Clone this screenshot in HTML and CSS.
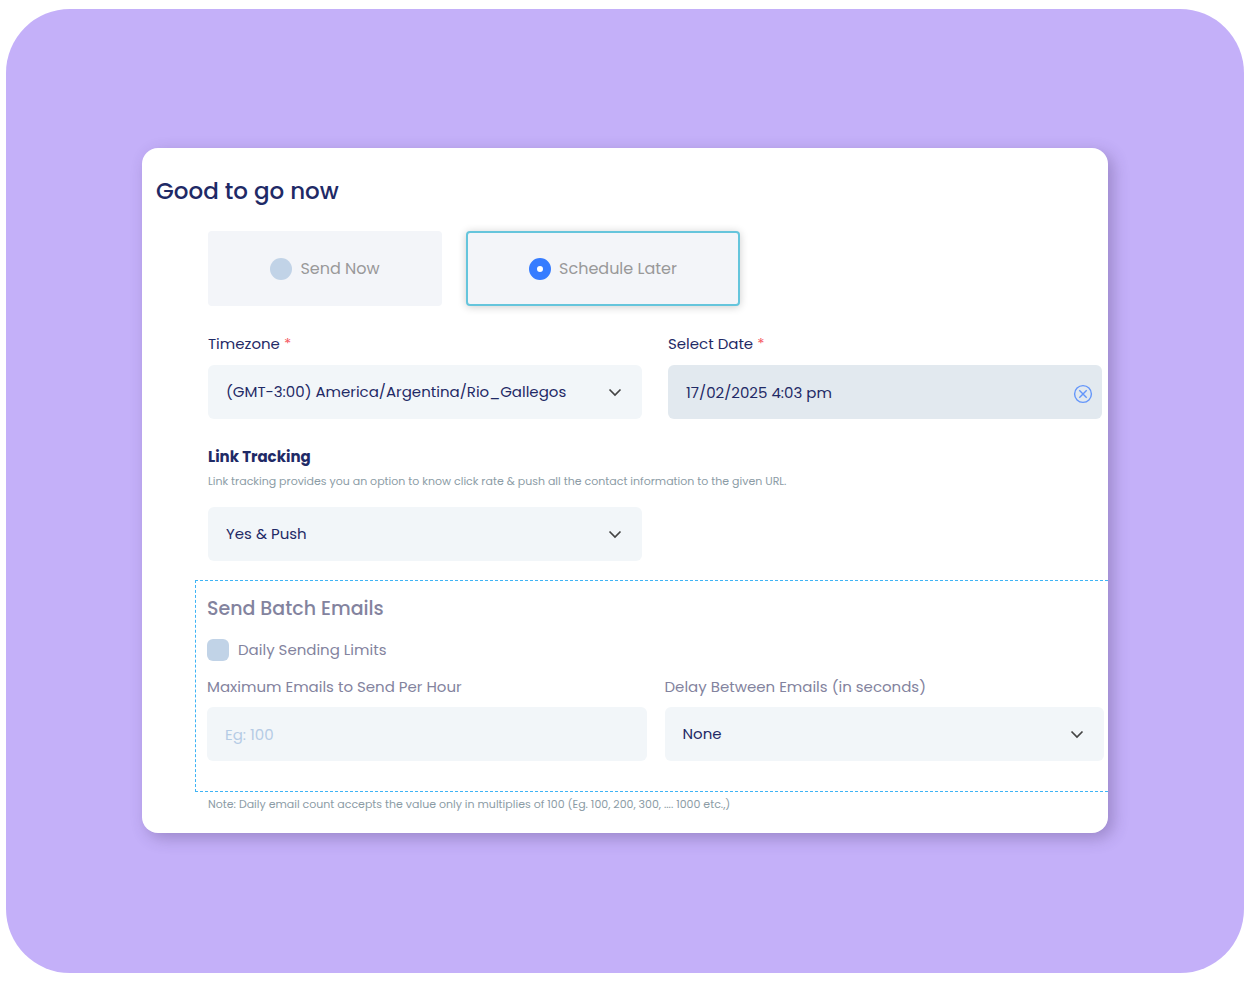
FILE: index.html
```
<!doctype html>
<html lang="en">

<head>
	<meta charset="UTF-8" />
	<meta name="viewport" content="width=device-width, initial-scale=1.0" />
	<title>Schedule campaign</title>
	<link rel="stylesheet" href="styles.css">
</head>

<body>
	<main class="stage">
		<form class="card">
			<h1>Good to go now</h1>
			<div class="content">
				<div class="send-options">
					<label class="option">
						<input type="radio" name="send" value="now">
						<span>Send Now</span>
					</label>
					<label class="option active">
						<input type="radio" name="send" value="later" checked>
						<span>Schedule Later</span>
					</label>
				</div>

				<div class="row">
					<div class="field">
						<label for="timezone">Timezone <span class="required">*</span></label>
						<div class="control">
							<select id="timezone">
								<option>(GMT-3:00) America/Argentina/Rio_Gallegos</option>
							</select>
							<svg class="chevron" viewBox="0 0 14 14"><path d="M1.5 4.5 7 10 12.5 4.5" /></svg>
						</div>
					</div>
					<div class="field">
						<label for="date">Select Date <span class="required">*</span></label>
						<div class="control">
							<input class="date" type="text" id="date" value="17/02/2025 4:03 pm">
							<button class="clear-btn" type="button" aria-label="Clear date">
								<svg viewBox="0 0 20 20"><circle cx="10" cy="10" r="8.4" /><path d="M6.3 6.3 13.7 13.7M13.7 6.3 6.3 13.7" /></svg>
							</button>
						</div>
					</div>
				</div>

				<div class="tracking">
					<h2><label for="tracking">Link Tracking</label></h2>
					<p class="hint">Link tracking provides you an option to know click rate &amp; push all the contact information to the given URL.</p>
					<div class="row">
						<div class="control">
							<select id="tracking">
								<option>Yes &amp; Push</option>
							</select>
							<svg class="chevron" viewBox="0 0 14 14"><path d="M1.5 4.5 7 10 12.5 4.5" /></svg>
						</div>
					</div>
				</div>
			</div>

			<section class="batch">
				<h2>Send Batch Emails</h2>
				<label class="check">
					<input type="checkbox">
					<span>Daily Sending Limits</span>
				</label>
				<div class="row">
					<div class="field">
						<label for="max-emails">Maximum Emails to Send Per Hour</label>
						<div class="control">
							<input type="text" id="max-emails" placeholder="Eg: 100">
						</div>
					</div>
					<div class="field">
						<label for="delay">Delay Between Emails (in seconds)</label>
						<div class="control">
							<select id="delay">
								<option>None</option>
							</select>
							<svg class="chevron" viewBox="0 0 14 14"><path d="M1.5 4.5 7 10 12.5 4.5" /></svg>
						</div>
					</div>
				</div>
			</section>
			<p class="hint note">Note: Daily email count accepts the value only in multiplies of 100 (Eg. 100, 200, 300, .... 1000 etc.,)</p>
		</form>
	</main>
</body>

</html>
```
FILE: styles.css
```
* {
	margin: 0;
	padding: 0;
	box-sizing: border-box;
}

body {
	font-family: Poppins, Inter, sans-serif;
	font-size: 15px;
	line-height: 24px;
	color: #1f2a66;
	background-color: #fff;
	padding: 9px 6px;
}

.stage {
	min-height: calc(100vh - 18px);
	padding: 139px 136px;
	border-radius: 64px;
	background-color: #c4b0f9;
}

.card {
	padding: 24px 0 17px;
	border-radius: 16px;
	background-color: #fff;
	box-shadow: 5px 5px 16px rgba(60, 40, 90, 0.3);
}

h1 {
	margin: 0 14px 21px;
	font-size: 23px;
	line-height: 38px;
	font-weight: 500;
}

.content {
	padding: 0 6px 0 66px;
}

.send-options {
	display: grid;
	grid-template-columns: 234px 274px;
	gap: 24px;
	margin-bottom: 26px;
}

.option {
	display: flex;
	justify-content: center;
	align-items: center;
	gap: 8px;
	height: 75px;
	border-radius: 4px;
	background-color: #f3f5f9;
	color: #999;
	font-size: 16px;
	cursor: pointer;
}

.option.active {
	border: 2px solid #65c5dc;
	box-shadow: 0 1px 8px rgba(0, 0, 0, 0.2);
}

input[type="radio"],
input[type="checkbox"] {
	appearance: none;
	width: 22px;
	height: 22px;
	background-color: #c1d3e7;
	cursor: pointer;
}

input[type="radio"] {
	border-radius: 50%;
}

input[type="radio"]:checked {
	border: 8px solid #367cff;
	background-color: #fff;
}

input[type="checkbox"] {
	border-radius: 6px;
}

.row {
	display: grid;
	grid-template-columns: 1fr 1fr;
	gap: 26px;
}

.field {
	display: flex;
	flex-direction: column;
	gap: 9px;
}

.required {
	color: #f55b64;
}

/* icon shares the grid cell with its input */
.control {
	display: grid;
	align-items: center;
}

.control > * {
	grid-area: 1 / 1;
}

select,
input[type="text"] {
	appearance: none;
	width: 100%;
	height: 54px;
	padding: 0 18px;
	border: none;
	border-radius: 6px;
	background-color: #f2f6f9;
	color: #1f2a66;
	font: inherit;
}

input[type="text"].date {
	background-color: #e2e9ef;
}

input::placeholder {
	color: #b5cbe5;
	opacity: 1;
}

.chevron {
	justify-self: end;
	width: 14px;
	height: 14px;
	margin-right: 20px;
	fill: none;
	stroke: #444;
	stroke-width: 1.7;
	pointer-events: none;
}

.clear-btn {
	justify-self: end;
	width: 20px;
	height: 20px;
	margin: 4px 9px 0 0;
	border: none;
	background: none;
	cursor: pointer;
}

.clear-btn svg {
	display: block;
	fill: none;
	stroke: #6496fa;
	stroke-width: 1.4;
}

.tracking {
	margin-top: 26px;
}

.tracking h2 {
	font-size: 15px;
	font-weight: 700;
}

.hint {
	font-size: 11px;
	color: #8c9ca6;
}

.tracking .hint {
	margin-bottom: 14px;
}

.batch {
	margin: 19px 0 0 53px;
	padding: 14px 4px 30px 11px;
	border: 1px dashed #3fb4f5;
	border-right: none;
	color: #83839e;
}

.batch h2 {
	margin-bottom: 15px;
	font-size: 19px;
	line-height: 28px;
	font-weight: 500;
}

.check {
	display: flex;
	align-items: center;
	gap: 9px;
	margin-bottom: 13px;
}

.batch .row {
	gap: 18px;
}

.batch .field {
	gap: 8px;
}

.note {
	padding-left: 66px;
}
```
